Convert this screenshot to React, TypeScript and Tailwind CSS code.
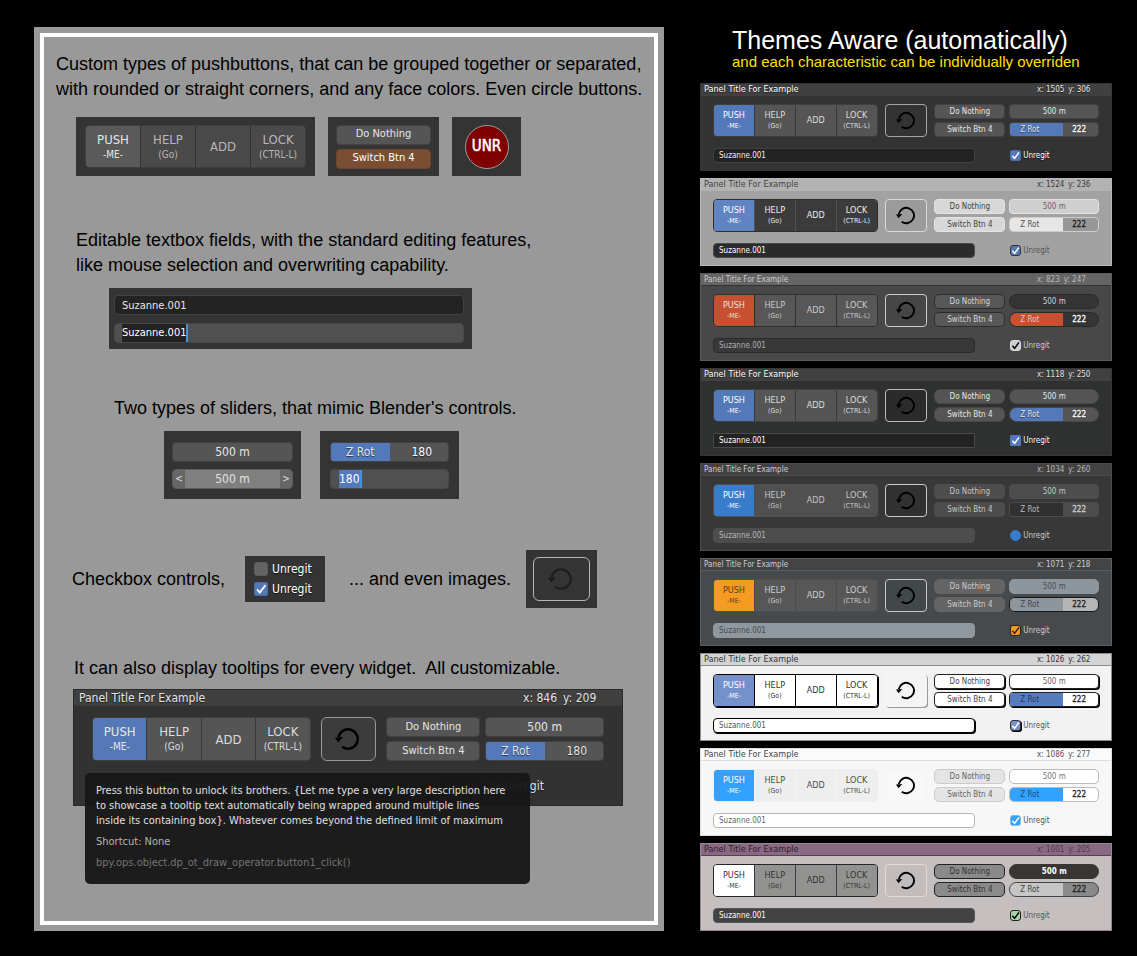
import React from "react";

type Size = "lg" | "sm";

interface Theme {
  name: string;
  x: number;
  y: number;
  panel: string;
  header: string;
  title: string;
  coords: string;
  group: string;
  push: string;
  button: string;
  divider: string;
  image: string;
  action: string;
  number: string;
  slider: string;
  fill: string;
  fillText: string;
  valueText: string;
  field: string;
  check: string;
  mark: string;
  label: string;
}

const shade = "[text-shadow:0_1px_1px_rgba(0,0,0,0.6)]";

const dark: Theme = {
  name: "dark",
  x: 1505,
  y: 306,
  panel: "bg-[#333333] border-[#363636] [text-shadow:0_1px_1px_rgba(0,0,0,0.6)]",
  header: "bg-[#404040] border-[#404040]",
  title: "text-white",
  coords: "text-[#e6e6e6]",
  group: "border-[#3e3e3e] rounded-[4px]",
  push: "bg-[#5479ba] text-white",
  button: "bg-[#555555] text-[#dddddd]",
  divider: "divide-[#3a3a3a]",
  image: "border-[#a6a6a6] bg-[#333333]",
  action: "bg-[#555555] border-[#424242] text-[#e6e6e6] rounded-[4px]",
  number: "bg-[#555555] border-[#424242] text-[#e6e6e6] rounded-[4px]",
  slider: "bg-[#555555] border-[#424242] rounded-[4px]",
  fill: "bg-[#5479ba]",
  fillText: "text-[#e6e6e6]",
  valueText: "text-white",
  field: "bg-[#232323] border-[#404040] text-[#f0f0f0] rounded-[4px]",
  check: "bg-[#5479ba] border-[#4a6ba6] rounded-[2px]",
  mark: "text-white",
  label: "text-white",
};

const themes: Theme[] = [
  dark,
  {
    name: "light",
    x: 1524,
    y: 236,
    panel: "bg-[#a2a2a2] border-[#b8b8b8]",
    header: "bg-[#b3b3b3] border-[#b3b3b3]",
    title: "text-[#444444]",
    coords: "text-[#3c3c3c]",
    group: "border-[#2e2e2e] rounded-[4px]",
    push: "bg-[#6083c2] text-white",
    button: "bg-[#3b3b3b] text-[#eeeeee]",
    divider: "divide-[#505050]",
    image: "border-[#d8d8d8] bg-[#9b9b9b]",
    action: "bg-[#d8d8d8] border-[#e4e4e4] text-[#444444] rounded-[4px]",
    number: "bg-[#cfcfcf] border-[#e4e4e4] text-[#666666] rounded-[4px]",
    slider: "bg-[#989898] border-[#cccccc] rounded-[4px]",
    fill: "bg-[#e6e6e6]",
    fillText: "text-[#555555]",
    valueText: "text-[#1c1c1c]",
    field: "bg-[#2b2b2b] border-[#4a4a4a] text-white rounded-[4px]",
    check: "bg-[#5479ba] border-[#333333] rounded-[3px]",
    mark: "text-white",
    label: "text-[#555555]",
  },
  {
    name: "red",
    x: 823,
    y: 247,
    panel: "bg-[#484848] border-[#5c5c5c]",
    header: "bg-[#656565] border-[#333333]",
    title: "text-[#cccccc] text-[8px]",
    coords: "text-[#b8b8b8]",
    group: "border-[#303030] rounded-[5px]",
    push: "bg-[#c75032] text-[#e8e0de]",
    button: "bg-[#575757] text-[#cccccc]",
    divider: "divide-[#2e2e2e]",
    image: "border-[#cccccc] bg-[#464646]",
    action: "bg-[#585858] border-[#2d2d2d] text-[#d6d6d6] rounded-[5px]",
    number: "bg-[#353535] border-[#2a2a2a] text-[#d0d0d0] rounded-full",
    slider: "bg-[#353535] border-[#2a2a2a] rounded-full",
    fill: "bg-[#c75032]",
    fillText: "text-[#dccac4]",
    valueText: "text-white",
    field: "bg-[#383838] border-[#2b2b2b] text-[#b0b0b0] rounded-[4px]",
    check: "bg-[#cccccc] border-[#dddddd] rounded-[3px]",
    mark: "text-black",
    label: "text-[#cccccc]",
  },
  {
    ...dark,
    name: "charcoal",
    x: 1118,
    y: 250,
    panel: "bg-[#2f3030] border-[#363636] [text-shadow:0_1px_1px_rgba(0,0,0,0.6)]",
    group: "border-[#424242] rounded-[5px]",
    image: "border-[#bbbbbb] bg-[#2b2b2b]",
    action: "bg-[#555555] border-[#484848] text-[#e6e6e6] rounded-[6px]",
    number: "bg-[#555555] border-[#484848] text-[#e6e6e6] rounded-full",
    slider: "bg-[#555555] border-[#484848] rounded-full",
    field: "bg-[#232323] border-[#4a4a4a] text-white rounded-[1px]",
    check: "bg-[#5479ba] border-[#5479ba] rounded-[1px]",
  },
  {
    name: "flat",
    x: 1034,
    y: 260,
    panel: "bg-[#383838] border-[#4c4c4c]",
    header: "bg-[#424242] border-[#4a4a4a]",
    title: "text-[#cccccc] text-[8px]",
    coords: "text-[#b8b8b8] text-[7px]",
    group: "border-[#505050] rounded-[4px]",
    push: "bg-[#387ccc] text-white",
    button: "bg-[#505050] text-[#c4c4c4]",
    divider: "divide-[#505050]",
    image: "border-[#cccccc] bg-[#313131]",
    action: "bg-[#4d4d4d] border-[#4d4d4d] text-[#c4c4c4] text-[7px] rounded-[4px]",
    number: "bg-[#4d4d4d] border-[#4d4d4d] text-[#c4c4c4] text-[7px] rounded-[4px]",
    slider: "bg-[#4d4d4d] border-[#4d4d4d] rounded-[4px] text-[7px]",
    fill: "bg-[#303030]",
    fillText: "text-[#b8b8b8]",
    valueText: "text-[#cccccc]",
    field: "bg-[#4d4d4d] border-[#4d4d4d] text-[#b8b8b8] text-[7px] rounded-[4px]",
    check: "bg-[#387ccc] border-[#387ccc] rounded-full",
    mark: "text-transparent",
    label: "text-[#cccccc] text-[7px]",
  },
  {
    name: "slate",
    x: 1071,
    y: 218,
    panel: "bg-[#464a4d] border-[#5c5f61]",
    header: "bg-[#444444] border-[#5c5f61]",
    title: "text-[#cccccc] text-[8px]",
    coords: "text-[#cccccc]",
    group: "border-[#4c4e50] rounded-[4px]",
    push: "bg-[#f59b22] text-[#55401f]",
    button: "bg-[#575757] text-[#cccccc]",
    divider: "divide-[#4a4a4a]",
    image: "border-[#c8c8c8] bg-[#42474a]",
    action: "bg-[#646464] border-[#646464] text-[#cccccc] text-[7px] rounded-[5px]",
    number: "bg-[#8d959d] border-[#8d959d] text-[#4a4f55] text-[7px] rounded-[5px]",
    slider: "bg-[#b5b5b5] border-[#151515] rounded-[6px] text-[7px]",
    fill: "bg-[#8d959d]",
    fillText: "text-[#44494e]",
    valueText: "text-[#1c1c1c]",
    field: "bg-[#8f979f] border-[#8f979f] text-[#464b50] text-[7px] rounded-[4px]",
    check: "bg-[#f59b22] border-[#222222] rounded-[3px]",
    mark: "text-[#33240c]",
    label: "text-[#cccccc] text-[7px]",
  },
  {
    name: "paper",
    x: 1026,
    y: 262,
    panel: "bg-[#f2f2f2] border-[#8c8c8c]",
    header: "bg-[#d4d4d4] border-[#8c8c8c]",
    title: "text-[#333333]",
    coords: "text-[#333333]",
    group: "border-black rounded-[4px] shadow-[1px_1px_0_black]",
    push: "bg-[#7591cb] text-white",
    button: "bg-white text-[#333333]",
    divider: "divide-black",
    image: "border-[#f6f6f6] bg-[#f4f4f4] shadow-[1px_1px_0_#999999]",
    action: "bg-white border-[#222222] text-[#444444] rounded-[4px] shadow-[1px_1px_0_black]",
    number: "bg-white border-[#222222] text-[#666666] rounded-[4px] shadow-[1px_1px_0_black]",
    slider: "bg-white border-[#222222] rounded-[4px] shadow-[1px_1px_0_black]",
    fill: "bg-[#567cc0]",
    fillText: "text-[#253a60]",
    valueText: "text-[#222222]",
    field: "bg-white border-black text-[#555555] rounded-[4px] shadow-[1px_1px_0_black]",
    check: "bg-[#7591cb] border-[#333333] rounded-[3px] shadow-[1px_1px_0_black]",
    mark: "text-white",
    label: "text-[#555555]",
  },
  {
    name: "white",
    x: 1086,
    y: 277,
    panel: "bg-[#f7f7f7] border-[#dddddd]",
    header: "bg-[#fafafa] border-[#dddddd]",
    title: "text-[#444444]",
    coords: "text-[#555555]",
    group: "border-[#eeeeee] rounded-[4px]",
    push: "bg-[#33a1ff] text-white",
    button: "bg-[#eeeeee] text-[#4c4c4c]",
    divider: "divide-[#f6f6f6]",
    image: "border-[#f3f3f3] bg-[#f8f8f8]",
    action: "bg-[#e4e4e4] border-[#cccccc] text-[#666666] rounded-[5px]",
    number: "bg-white border-[#bbbbbb] text-[#777777] rounded-[5px]",
    slider: "bg-white border-[#bbbbbb] rounded-[5px]",
    fill: "bg-[#33a1ff]",
    fillText: "text-[#17517f]",
    valueText: "text-[#222222]",
    field: "bg-white border-[#b4b4b4] text-[#666666] rounded-[4px]",
    check: "bg-[#33a1ff] border-[#8cb8dc] rounded-[3px]",
    mark: "text-white",
    label: "text-[#555555]",
  },
  {
    name: "plum",
    x: 1001,
    y: 205,
    panel: "bg-[#c6bfbf] border-[#8f8b8c]",
    header: "bg-[#8a6984] border-[#5c3f57]",
    title: "text-[#2b222a]",
    coords: "text-[#4c3d49]",
    group: "border-[#262626] rounded-[4px]",
    push: "bg-white text-[#333333]",
    button: "bg-[#929290] text-[#333333]",
    divider: "divide-[#3c3c3c]",
    image: "border-[#dedada] bg-[#c3bcbc]",
    action: "bg-[#8a8a8a] border-[#222222] text-[#333333] rounded-[5px]",
    number: "bg-[#373635] border-[#373635] text-white font-bold rounded-full",
    slider: "bg-[#8a8a8a] border-[#444444] rounded-full",
    fill: "bg-[#c6c6c6]",
    fillText: "text-[#444444]",
    valueText: "text-[#1c1c1c]",
    field: "bg-[#434343] border-[#555555] text-white rounded-[4px]",
    check: "bg-[#a9d3a6] border-[#222222] rounded-[3px]",
    mark: "text-black",
    label: "text-[#555555]",
  },
];

const demoTheme: Theme = {
  ...dark,
  x: 846,
  y: 209,
  panel: "bg-[#323232] border-[#2a2a2a] [text-shadow:0_1px_1px_rgba(0,0,0,0.6)]",
  header: "bg-[#404040] border-[#3c3c3c]",
  title: "text-[#e6e6e6]",
  push: "bg-[#5479b6] text-[#e6e6e6]",
  valueText: "text-[#e6e6e6]",
  image: "border-[#999999] bg-[#3c3c3c]",
  label: "text-[#e0e0e0]",
};

const groupButtons = [
  { title: "PUSH", hint: "-ME-" },
  { title: "HELP", hint: "(Go)" },
  { title: "ADD" },
  { title: "LOCK", hint: "(CTRL-L)" },
];

function ButtonGroup({ theme, size }: { theme: Theme; size: Size }) {
  return (
    <div className={`flex h-full w-full divide-x overflow-hidden border ${theme.group} ${theme.divider}`}>
      {groupButtons.map((b, i) => (
        <button
          key={b.title}
          className={`flex min-w-0 flex-1 flex-col items-center justify-center ${i === 0 ? theme.push : theme.button}`}
        >
          <span className={size === "lg" ? "text-[13px] leading-[15px]" : "text-[9px] leading-[11px]"}>{b.title}</span>
          {b.hint && (
            <span className={size === "lg" ? "text-[10px] leading-[15px]" : "text-[7px] leading-[10px]"}>{b.hint}</span>
          )}
        </button>
      ))}
    </div>
  );
}

function ImageButton({ theme, size, dim }: { theme: Theme; size: Size; dim?: boolean }) {
  return (
    <button
      aria-label="Reset"
      className={`flex h-full w-full items-center justify-center border ${size === "lg" ? "rounded-[6px] pr-1" : "rounded-[4px] pr-[2px]"} ${theme.image}`}
    >
      <svg
        viewBox="0 0 24 24"
        fill="none"
        className={`${size === "lg" ? "size-6" : "size-[19px]"} ${dim ? "text-[#1c1c1c]" : "text-black"}`}
      >
        <path d="M3.5 10.2A9.7 9.7 0 1 1 7.2 19.8" stroke="currentColor" strokeWidth={dim ? 2 : 2.4} />
        <path d="M0 10.8L8 10L3.2 15.6Z" fill="currentColor" />
      </svg>
    </button>
  );
}

function ActionButton({ size, className, children }: { size: Size; className: string; children: React.ReactNode }) {
  return (
    <button
      className={`flex w-full items-center justify-center border whitespace-nowrap ${size === "lg" ? "h-5 text-[11px]" : "h-[15px] text-[8px]"} ${className}`}
    >
      {children}
    </button>
  );
}

function NumberField({ theme, size }: { theme: Theme; size: Size }) {
  return (
    <input
      aria-label="Distance"
      defaultValue="500 m"
      className={`block w-full min-w-0 border text-center ${size === "lg" ? "h-5 text-[12px]" : "h-[15px] text-[8px]"} ${theme.number}`}
    />
  );
}

function ValueSlider({ theme, size, value }: { theme: Theme; size: Size; value: number }) {
  const lg = size === "lg";
  return (
    <label
      className={`relative flex w-full items-stretch overflow-hidden border ${lg ? "h-5 text-[12px]" : "h-[15px] text-[8px]"} ${theme.slider}`}
    >
      <span className={`flex items-center ${lg ? "w-1/2 justify-center" : "w-3/5 pl-[10px]"} ${theme.fill} ${theme.fillText}`}>
        Z Rot
      </span>
      <span className={`flex flex-1 items-center justify-end ${lg ? "pr-4" : "pr-3 [-webkit-text-stroke:0.3px]"} ${theme.valueText}`}>
        {value}
      </span>
      <input type="range" min={0} max={360} defaultValue={value} className="absolute inset-0 h-full w-full opacity-0" />
    </label>
  );
}

function Check({ theme, size, checked = true }: { theme: Theme; size: Size; checked?: boolean }) {
  const lg = size === "lg";
  return (
    <label
      className={`flex items-center ${lg ? "gap-1 text-[12px] leading-4" : "gap-[2px] text-[8px] leading-3"} ${theme.label}`}
    >
      <span className="grid">
        <input
          type="checkbox"
          defaultChecked={checked}
          className={`col-start-1 row-start-1 appearance-none border ${lg ? "size-[14px]" : "size-[11px]"} ${checked ? theme.check : "rounded-[3px] border-[#5c5c5c] bg-[#646464]"}`}
        />
        {checked && (
          <svg
            viewBox="0 0 14 14"
            fill="none"
            className={`pointer-events-none col-start-1 row-start-1 ${lg ? "size-[14px]" : "size-[11px]"} ${theme.mark}`}
          >
            <path d="M3 7.4L5.8 10.6L11.4 3.2" stroke="currentColor" strokeWidth="1.8" />
          </svg>
        )}
      </span>
      <span>Unregit</span>
    </label>
  );
}

function Panel({ theme, size, text }: { theme: Theme; size: Size; text: string }) {
  const lg = size === "lg";
  return (
    <section className={`border ${theme.panel}`}>
      <header
        className={`flex items-center justify-between border-b whitespace-nowrap ${lg ? "h-4 pl-[5px] text-[12px]" : "h-3 pl-[3px] text-[9px]"} ${theme.header}`}
      >
        <h3 className={theme.title}>Panel Title For Example</h3>
        <div className={`flex ${lg ? "w-[99px] gap-[6px]" : "w-[74px] gap-1 text-[8px]"} ${theme.coords}`}>
          <span>x: {theme.x}</span>
          <span>y: {theme.y}</span>
        </div>
      </header>
      <div className={`flex flex-col ${lg ? "gap-[15px] px-[18px] pt-[11px] pb-[9px]" : "gap-[11px] px-3 pt-2 pb-[7px]"}`}>
        <div className={`flex ${lg ? "h-11 gap-[10px]" : "h-[33px] gap-[7px]"}`}>
          <div className={lg ? "min-w-0 flex-[219]" : "min-w-0 flex-[165]"}>
            <ButtonGroup theme={theme} size={size} />
          </div>
          <div className={lg ? "min-w-0 flex-[56]" : "min-w-0 flex-[43]"}>
            <ImageButton theme={theme} size={size} />
          </div>
          <div className={`flex min-w-0 ${lg ? "flex-[218] gap-[5px]" : "flex-[165] gap-1"}`}>
            <div className={`flex min-w-0 flex-col justify-between ${lg ? "flex-[94]" : "flex-[71]"}`}>
              <ActionButton size={size} className={theme.action}>Do Nothing</ActionButton>
              <ActionButton size={size} className={theme.action}>Switch Btn 4</ActionButton>
            </div>
            <div className={`flex min-w-0 flex-col justify-between ${lg ? "flex-[119]" : "flex-[90]"}`}>
              <NumberField theme={theme} size={size} />
              <ValueSlider theme={theme} size={size} value={lg ? 180 : 222} />
            </div>
          </div>
        </div>
        <div className="flex items-center justify-between">
          <input
            aria-label="Object name"
            defaultValue={text}
            className={`w-[68%] border ${lg ? "h-5 px-[6px] text-[11px]" : "h-[15px] px-[5px] text-[8px]"} ${theme.field}`}
          />
          <div className="w-[23%]">
            <Check theme={theme} size={size} checked={!lg} />
          </div>
        </div>
      </div>
    </section>
  );
}

function Swatch({ className, children }: { className: string; children: React.ReactNode }) {
  return <div className={`bg-[#343434] ${shade} ${className}`}>{children}</div>;
}

const groupTheme: Theme = {
  ...dark,
  push: "bg-[#5a5a5a] text-[#e6e6e6]",
  button: "bg-[#4a4a4a] text-[#b8b8b8]",
  divider: "divide-[#323232]",
  image: "border-[#b4b4b4] bg-[#343434]",
};

const caption = "font-['Liberation_Sans',sans-serif] text-[18px] leading-[25px] text-black";

export default function App() {
  return (
    <main className="grid min-h-screen grid-cols-[minmax(0,630fr)_minmax(0,412fr)] items-start gap-9 bg-black pt-[27px] pr-[25px] pb-[25px] pl-[34px] font-['DejaVu_Sans_Condensed','DejaVu_Sans',sans-serif]">
      <section className="bg-[#999999] p-[6px]">
        <div className="border-4 border-white pt-[15px] pb-[37px]">
          <p className={`pl-3 whitespace-nowrap ${caption}`}>
            Custom types of pushbuttons, that can be grouped together or separated,
            <br />
            with rounded or straight corners, and any face colors. Even circle buttons.
          </p>
          <div className="mt-[15px] flex gap-[13px] pl-8">
            <Swatch className="h-[59px] w-[239px] px-[9px] py-2">
              <ButtonGroup theme={groupTheme} size="lg" />
            </Swatch>
            <Swatch className="flex w-[111px] flex-col justify-center gap-1 px-2">
              <ActionButton size="lg" className={dark.action}>Do Nothing</ActionButton>
              <ActionButton size="lg" className="rounded-[4px] border-[#6a4630] bg-[#7a4e33] text-white">
                Switch Btn 4
              </ActionButton>
            </Swatch>
            <Swatch className="flex w-[69px] items-center justify-center">
              <button className="size-11 rounded-full border border-[#999999] bg-[#800000] text-[15px] text-white [-webkit-text-stroke:0.5px]">
                UNR
              </button>
            </Swatch>
          </div>

          <p className={`mt-[52px] pl-8 ${caption}`}>
            Editable textbox fields, with the standard editing features,
            <br />
            like mouse selection and overwriting capability.
          </p>
          <div className="mt-[10px] pl-[65px]">
            <Swatch className="flex w-[363px] flex-col gap-2 pt-[7px] pr-2 pb-[6px] pl-[5px] text-[11px]">
              <input
                aria-label="Name"
                defaultValue="Suzanne.001"
                className="h-5 rounded-[4px] border border-[#424242] bg-[#232323] px-[7px] text-[#e6e6e6]"
              />
              <label className="flex h-5 items-stretch rounded-[4px] border border-[#484848] bg-[#505050] pl-[7px]">
                <input
                  aria-label="Name being edited"
                  defaultValue="Suzanne.001"
                  className="border-r-2 border-[#3f92dc] bg-[#222222] text-white [field-sizing:content]"
                />
              </label>
            </Swatch>
          </div>

          <p className={`mt-[47px] pl-[70px] ${caption}`}>Two types of sliders, that mimic Blender's controls.</p>
          <div className="mt-[10px] flex gap-[19px] pl-[120px]">
            <Swatch className="flex h-[68px] w-[137px] flex-col justify-center gap-[7px] px-2">
              <NumberField theme={dark} size="lg" />
              <div className="flex h-5 overflow-hidden rounded-[4px] border border-[#5c5c5c] text-[12px] text-[#e0e0e0]">
                <button aria-label="Decrease" className="w-3 bg-[#666666] text-[10px]">&lt;</button>
                <input aria-label="Distance" defaultValue="500 m" className="min-w-0 flex-1 bg-[#808080] text-center" />
                <button aria-label="Increase" className="w-3 bg-[#666666] text-[10px]">&gt;</button>
              </div>
            </Swatch>
            <Swatch className="flex h-[68px] w-[139px] flex-col justify-center gap-[7px] px-[10px]">
              <ValueSlider theme={dark} size="lg" value={180} />
              <label className="flex h-5 items-stretch rounded-[4px] border border-[#484848] bg-[#505050] pl-2 text-[12px]">
                <input
                  aria-label="Rotation"
                  defaultValue="180"
                  className="border-r-2 border-[#3f92dc] bg-[#5479ba] text-white [field-sizing:content]"
                />
              </label>
            </Swatch>
          </div>

          <div className="mt-[51px] flex items-center pl-7">
            <p className={`w-[173px] whitespace-nowrap ${caption}`}>Checkbox controls,</p>
            <Swatch className="flex h-[46px] w-20 flex-col justify-center gap-1 pl-[9px]">
              <Check theme={dark} size="lg" checked={false} />
              <Check theme={dark} size="lg" />
            </Swatch>
            <p className={`w-[201px] pl-6 whitespace-nowrap ${caption}`}>... and even images.</p>
            <Swatch className="h-[58px] w-[71px] p-[7px]">
              <ImageButton theme={groupTheme} size="lg" dim />
            </Swatch>
          </div>

          <p className={`mt-12 pl-[30px] whitespace-pre ${caption}`}>
            {"It can also display tooltips for every widget.  All customizable."}
          </p>
          <div className="relative mt-2 mr-[31px] ml-[29px] pb-[78px]">
            <Panel theme={demoTheme} size="lg" text="<Press the ADD button so you can edit here>" />
            <div
              role="tooltip"
              className="absolute top-[84px] left-3 flex h-[111px] w-[445px] flex-col gap-[6px] rounded-[5px] bg-[#181818f6] px-[11px] pt-[10px] text-[11px] leading-[15px] whitespace-nowrap text-[#e0e0e0]"
            >
              <p>
                Press this button to unlock its brothers. {"{"}Let me type a very large description here
                <br />
                to showcase a tooltip text automatically being wrapped around multiple lines
                <br />
                inside its containing box{"}"}. Whatever comes beyond the defined limit of maximum
              </p>
              <p className="text-[#b4b4b4]">Shortcut: None</p>
              <p className="text-[#747474]">bpy.ops.object.dp_ot_draw_operator.button1_click()</p>
            </div>
          </div>
        </div>
      </section>

      <section>
        <header className="pl-8 font-['Liberation_Sans',sans-serif] whitespace-nowrap">
          <h1 className="text-[25px] leading-[27px] text-white">Themes Aware (automatically)</h1>
          <h2 className="text-[15px] leading-4 text-[#ffe000]">and each characteristic can be individually overriden</h2>
        </header>
        <div className="mt-[13px] flex flex-col gap-[7px]">
          {themes.map((t) => (
            <Panel key={t.name} theme={t} size="sm" text="Suzanne.001" />
          ))}
        </div>
      </section>
    </main>
  );
}
